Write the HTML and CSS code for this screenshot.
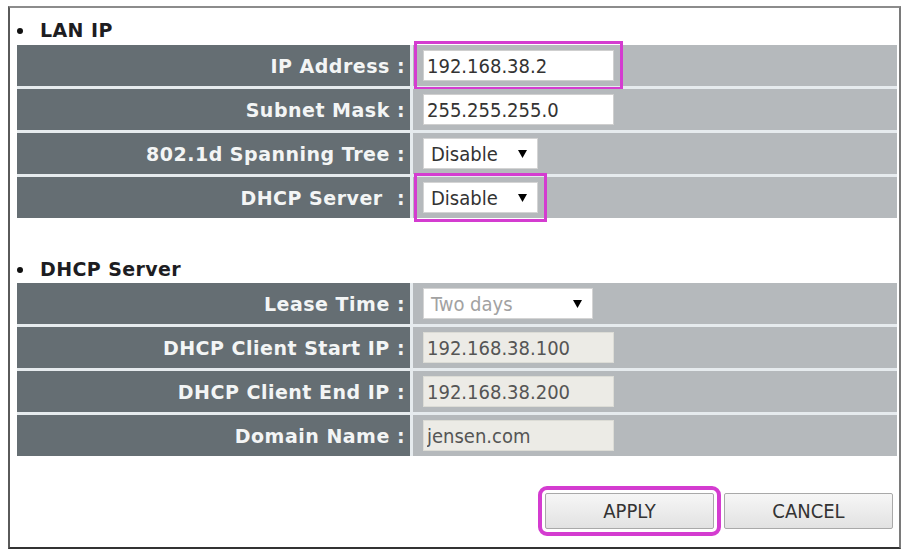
FILE: index.html
```html
<!DOCTYPE html>
<html lang="en">
<head>
    <meta charset="UTF-8">
    <title>LAN Setup</title>
    <link rel="stylesheet" href="styles.css">
</head>
<body>
    <div class="frame">
        <h3 class="section first">LAN IP</h3>
        <div class="grid">
            <div class="label">IP Address :</div>
            <div class="value"><input type="text" class="field marked" value="192.168.38.2"></div>
            <div class="label">Subnet Mask :</div>
            <div class="value"><input type="text" class="field" value="255.255.255.0"></div>
            <div class="label">802.1d Spanning Tree :</div>
            <div class="value">
                <div class="select">
                    <span>Disable</span>
                    <svg width="9" height="8" viewBox="0 0 9 8"><path d="M0 0h9L4.5 8z"/></svg>
                </div>
            </div>
            <div class="label">DHCP Server&nbsp; :</div>
            <div class="value">
                <div class="select marked-select">
                    <span>Disable</span>
                    <svg width="9" height="8" viewBox="0 0 9 8"><path d="M0 0h9L4.5 8z"/></svg>
                </div>
            </div>
        </div>

        <h3 class="section">DHCP Server</h3>
        <div class="grid">
            <div class="label">Lease Time :</div>
            <div class="value">
                <div class="select wide off">
                    <span>Two days</span>
                    <svg width="9" height="8" viewBox="0 0 9 8"><path d="M0 0h9L4.5 8z"/></svg>
                </div>
            </div>
            <div class="label">DHCP Client Start IP :</div>
            <div class="value"><input type="text" class="field" value="192.168.38.100" disabled></div>
            <div class="label">DHCP Client End IP :</div>
            <div class="value"><input type="text" class="field" value="192.168.38.200" disabled></div>
            <div class="label">Domain Name :</div>
            <div class="value"><input type="text" class="field" value="jensen.com" disabled></div>
        </div>

        <div class="actions">
            <button class="btn marked-btn">APPLY</button>
            <button class="btn">CANCEL</button>
        </div>
    </div>
</body>
</html>
```

FILE: styles.css
```css
body {
    margin: 0;
    background: #fff;
    font-family: "DejaVu Sans", Verdana, sans-serif;
}
.frame {
    margin: 6px 3px 0 8px;
    height: 539px;
    border-top: 2px solid #8c8c8c;
    border-left: 2px solid #5a5a5a;
    border-right: 2px solid #7a7a7a;
    border-bottom: 2px solid #333;
    padding: 0 2px 0 7px;
}
.section {
    margin: 0 0 2px 0;
    padding: 39px 0 0 23px;
    position: relative;
    font-size: 19px;
    line-height: 24px;
    color: #1d1d22;
    letter-spacing: 0.4px;
}
.section.first {
    padding-top: 10px;
    margin-bottom: 3px;
}
.section::before {
    content: "";
    position: absolute;
    left: 0;
    bottom: 8px;
    width: 6px;
    height: 6px;
    border-radius: 50%;
    background: #111;
}
.grid {
    display: grid;
    grid-template-columns: 393px 1fr;
    grid-auto-rows: 41px;
    gap: 3px;
    background: #e6ebee;
}
.label {
    background: #656e73;
    color: #f3f5f5;
    font-weight: bold;
    font-size: 19px;
    letter-spacing: 0.5px;
    padding-right: 5px;
    display: flex;
    align-items: center;
    justify-content: flex-end;
    white-space: pre;
}
.value {
    background: #b5b9bc;
    display: flex;
    align-items: center;
    padding-left: 10px;
}
.field, .select {
    font-family: "DejaVu Sans Condensed", "Open Sans", sans-serif;
    font-size: 20px;
    color: #333;
    box-sizing: border-box;
    height: 31px;
}
.field {
    width: 191px;
    border: 1px solid #cfcfcf;
    background: #fff;
    padding: 0 3px;
}
.field:disabled {
    background: #ecebe6;
    color: #555;
    border-color: #dcdcd6;
}
.select {
    width: 115px;
    background: #fff;
    border: 1px solid #d4d4d4;
    display: flex;
    align-items: center;
    justify-content: space-between;
    padding: 0 10px 0 7px;
}
.select.wide {
    width: 170px;
}
.select.off span {
    color: #a2a2a2;
}
.marked {
    outline: 3px solid #d43cd0;
    outline-offset: 6px;
}
.marked-select {
    outline: 3px solid #d43cd0;
    outline-offset: 6px;
}
.actions {
    display: flex;
    justify-content: flex-end;
    gap: 10px;
    margin-top: 37px;
    padding-right: 4px;
}
.btn {
    width: 169px;
    height: 36px;
    font-family: "DejaVu Sans Condensed", "Open Sans", sans-serif;
    font-size: 20px;
    color: #333;
    background: linear-gradient(#f6f6f6, #e2e2e2);
    border: 1px solid #a9a9a9;
    border-radius: 2px;
}
.marked-btn {
    outline: 4px solid #d43cd0;
    outline-offset: 3px;
}
```
